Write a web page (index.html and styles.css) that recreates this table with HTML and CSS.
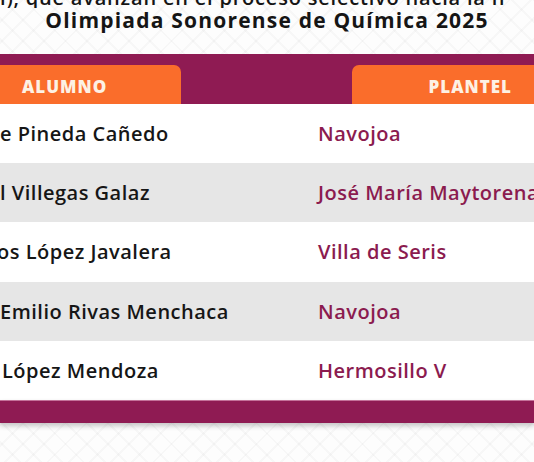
FILE: index.html
```html
<!DOCTYPE html>
<html lang="es">
<head>
<meta charset="utf-8">
<title>Olimpiada Sonorense de Química 2025</title>
<link rel="stylesheet" href="styles.css">
</head>
<body>
<div class="page">
  <header class="title">
    <p class="line1">l), que avanzan en el proceso selectivo hacia la n</p>
    <h1 class="line2">Olimpiada Sonorense de Química 2025</h1>
  </header>
  <section class="table">
    <div class="thead">
      <div class="tab tab-left">ALUMNO</div>
      <div class="tab tab-right">PLANTEL</div>
    </div>
    <div class="row">
      <span class="name">e Pineda Cañedo</span>
      <span class="place">Navojoa</span>
    </div>
    <div class="row alt">
      <span class="name">l Villegas Galaz</span>
      <span class="place">José María Maytorena</span>
    </div>
    <div class="row">
      <span class="name name-cut">os López Javalera</span>
      <span class="place">Villa de Seris</span>
    </div>
    <div class="row alt">
      <span class="name">Emilio Rivas Menchaca</span>
      <span class="place">Navojoa</span>
    </div>
    <div class="row">
      <span class="name name-in">López Mendoza</span>
      <span class="place">Hermosillo V</span>
    </div>
    <div class="tfoot"></div>
  </section>
</div>
</body>
</html>
```

FILE: styles.css
```css
html, body {
  margin: 0;
  padding: 0;
}

body {
  width: 534px;
  height: 462px;
  overflow: hidden;
  font-family: "Open Sans", "DejaVu Sans", sans-serif;
  color: #151515;
  background-color: #fdfdfd;
  background-image:
    repeating-linear-gradient(45deg, rgba(0,0,0,0) 0 13px, rgba(0,0,0,0.022) 13px 15px),
    repeating-linear-gradient(-45deg, rgba(0,0,0,0) 0 13px, rgba(0,0,0,0.022) 13px 15px);
}

.page {
  display: flex;
  flex-direction: column;
}

.title {
  display: flex;
  flex-direction: column;
  align-items: center;
}

.line1 {
  margin: -12px 0 0 0;
  width: 534px;
  white-space: nowrap;
  overflow: hidden;
  font-size: 20px;
  font-weight: 600;
  line-height: 20px;
  letter-spacing: 0.8px;
}

.line2 {
  margin: 1px 0 0 0;
  font-size: 21px;
  font-weight: 700;
  line-height: 22px;
  letter-spacing: 1.2px;
  white-space: nowrap;
}

.table {
  margin-top: 23px;
  display: flex;
  flex-direction: column;
}

.thead {
  background: #8f1b53;
  height: 50px;
  padding-top: 11px;
  box-sizing: border-box;
  display: flex;
  justify-content: space-between;
  align-items: flex-end;
}

.tab {
  height: 39px;
  padding-top: 3px;
  background: #fa6d2b;
  color: #fdf1e4;
  font-weight: 800;
  font-size: 17px;
  letter-spacing: 1px;
  display: flex;
  align-items: center;
  box-sizing: border-box;
}

.tab-left {
  width: 181px;
  padding-left: 22px;
  border-top-right-radius: 7px;
}

.tab-right {
  width: 182px;
  padding-right: 22px;
  justify-content: flex-end;
  border-top-left-radius: 7px;
}

.row {
  height: 59.2px;
  display: grid;
  grid-template-columns: 318px 1fr;
  align-items: center;
  background: #ffffff;
  font-size: 20px;
  font-weight: 600;
  letter-spacing: 0.5px;
  white-space: nowrap;
  overflow: hidden;
}

.row.alt {
  background: #e6e6e6;
}

.name {
  color: #161616;
}

.name-cut {
  margin-left: -3px;
}

.name-in {
  margin-left: 2px;
}

.place {
  color: #8b1b4f;
}

.tfoot {
  height: 23px;
  background: #8f1b53;
  border-top: 1px solid #c4729a;
  box-sizing: border-box;
  box-shadow: 0 3px 5px rgba(0, 0, 0, 0.22);
}
```
